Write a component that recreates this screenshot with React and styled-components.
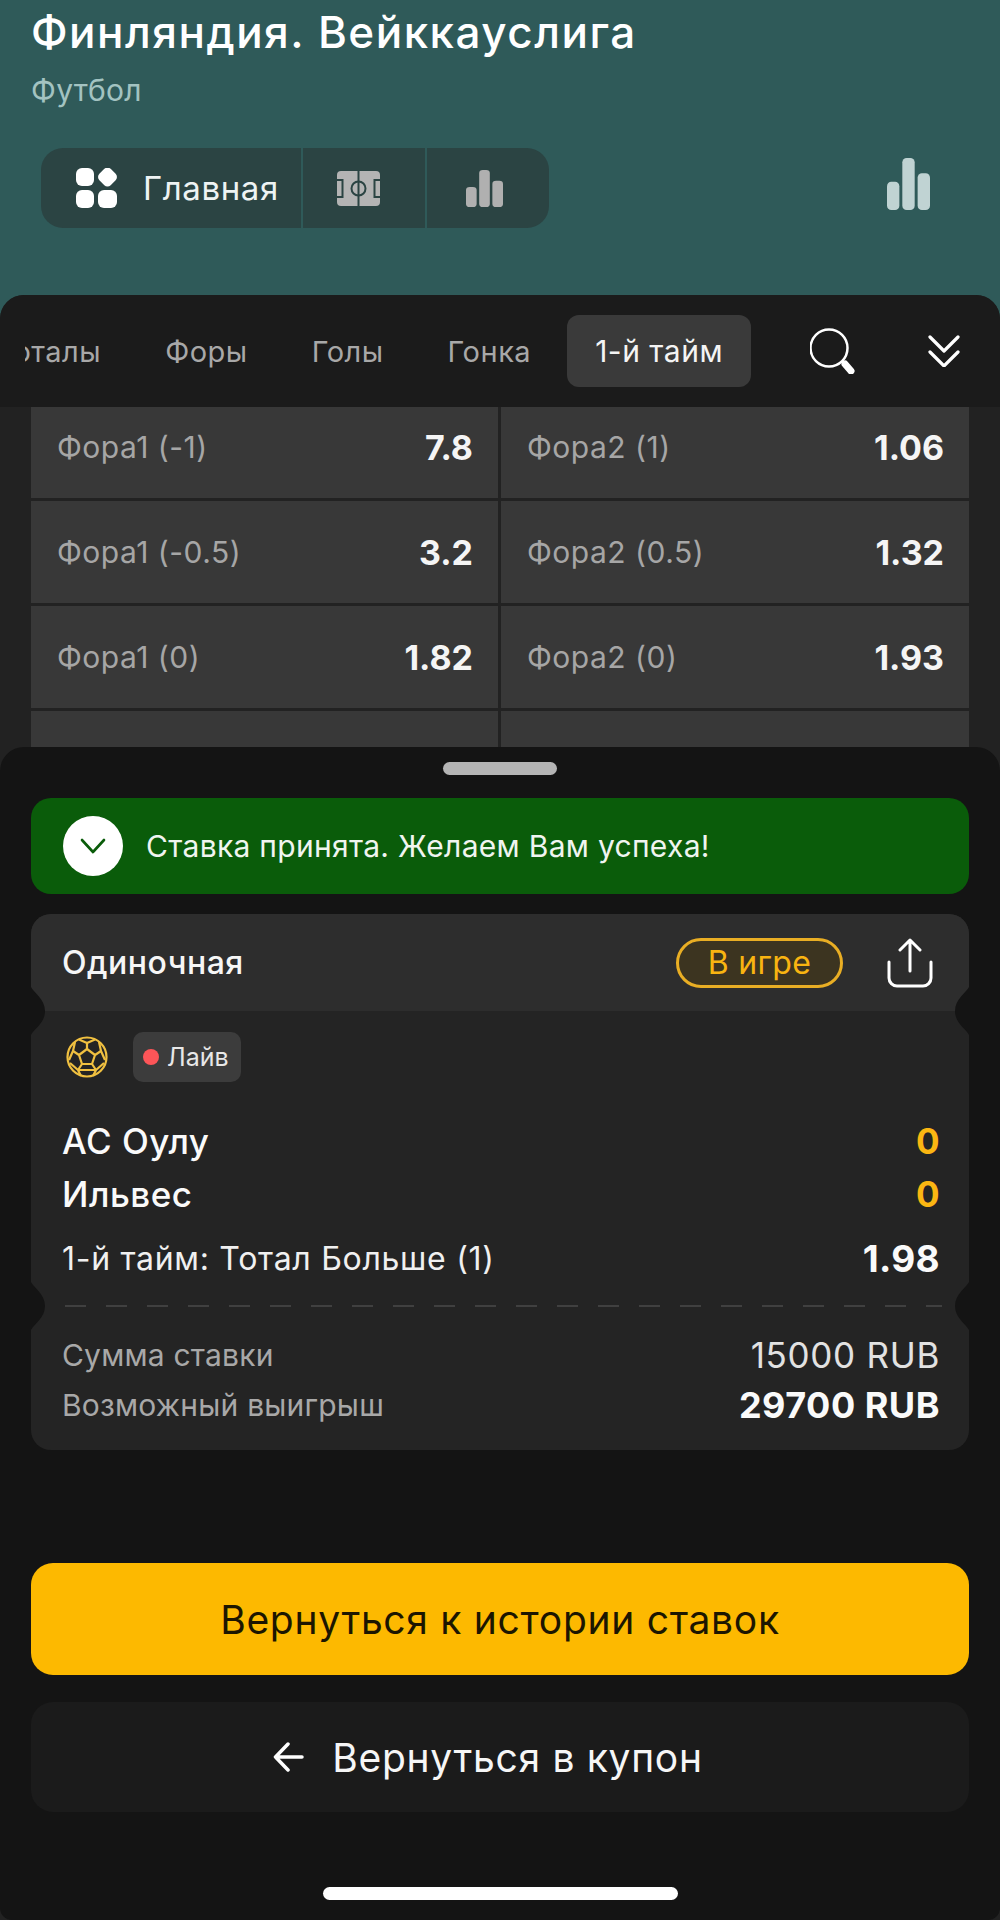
import React from 'react';
import styled, { createGlobalStyle } from 'styled-components';

const GlobalStyle = createGlobalStyle`
  html, body {
    margin: 0;
    padding: 0;
    background: #2f5a59;
  }
  * {
    box-sizing: border-box;
  }
`;

const Page = styled.div`
  position: relative;
  width: 1000px;
  height: 1920px;
  overflow: hidden;
  display: flex;
  flex-direction: column;
  background: #2f5a59;
  font-family: Inter, "Noto Sans", sans-serif;
`;

const Header = styled.header`
  height: 295px;
  flex-shrink: 0;
  padding: 7px 31px 0;
`;

const Title = styled.h1`
  margin: 0;
  font-size: 44px;
  line-height: 50px;
  font-weight: 500;
  letter-spacing: 1.5px;
  color: #fff;
`;

const Subtitle = styled.div`
  margin-top: 15px;
  font-size: 30px;
  line-height: 36px;
  letter-spacing: 0.3px;
  color: #a3c3c1;
`;

const HeaderRow = styled.div`
  margin-top: 40px;
  padding: 0 39px 0 10px;
  display: flex;
  align-items: flex-start;
  justify-content: space-between;
`;

const Segments = styled.div`
  display: flex;
  height: 80px;
  gap: 2px;
`;

const Segment = styled.div`
  display: flex;
  align-items: center;
  justify-content: ${p => (p.$start ? 'flex-start' : 'center')};
  padding: ${p => (p.$start ? '0 0 0 35px' : `0 ${p.$inset}px 0 0`)};
  gap: 26px;
  width: ${p => p.$width}px;
  background: #2b4443;
  border-radius: ${p => p.$radius};
  font-size: 33px;
  letter-spacing: 0.6px;
  color: #eef3f3;
`;

const StatsButton = styled.div`
  margin-top: 10px;
  display: flex;
`;

const Markets = styled.section`
  flex: 1;
  display: flex;
  flex-direction: column;
  background: #222;
  border-radius: 24px 24px 0 0;
  overflow: hidden;
`;

const TabBar = styled.nav`
  position: relative;
  z-index: 1;
  height: 112px;
  flex-shrink: 0;
  display: flex;
  align-items: center;
  padding: 8px 0 8px 25px;
  background: #1b1b1b;
`;

const TabScroll = styled.div`
  width: 726px;
  overflow: hidden;
  display: flex;
  justify-content: flex-end;
  gap: 8px;
  flex-shrink: 0;
`;

const Tab = styled.div`
  flex-shrink: 0;
  height: 72px;
  padding: 0 28px;
  display: flex;
  align-items: center;
  border-radius: 12px;
  font-size: ${p => (p.$active ? 30 : 29)}px;
  letter-spacing: 0.5px;
  background: ${p => (p.$active ? '#3a3a3a' : 'transparent')};
  color: ${p => (p.$active ? '#f4f4f4' : '#a8a8a8')};
`;

const TabIcons = styled.div`
  display: flex;
  align-items: center;
  margin-left: 59px;
  gap: 72px;
`;

const OddsGrid = styled.div`
  margin: -11px 31px 0;
  display: grid;
  grid-template-columns: 467px 468px;
  grid-auto-rows: 102px;
  gap: 3px;
  justify-content: space-between;
`;

const OddsCell = styled.div`
  padding: 0 25px 0 26px;
  display: flex;
  align-items: center;
  justify-content: space-between;
  background: #383838;
`;

const OddsLabel = styled.span`
  font-size: 30px;
  letter-spacing: 0.5px;
  color: #a6a6a6;
`;

const OddsValue = styled.span`
  font-size: 34px;
  font-weight: 700;
  color: #f5f5f5;
`;

const Sheet = styled.section`
  position: absolute;
  left: 0;
  right: 0;
  top: 747px;
  bottom: 0;
  padding: 15px 31px 0;
  background: #141414;
  border-radius: 24px 24px 12px 12px;
  display: flex;
  flex-direction: column;
`;

const Handle = styled.div`
  align-self: center;
  width: 114px;
  height: 13px;
  border-radius: 7px;
  background: #b5b5b5;
`;

const Banner = styled.div`
  margin-top: 23px;
  height: 96px;
  padding: 0 32px;
  display: flex;
  align-items: center;
  gap: 23px;
  background: #0a5c0a;
  border-radius: 20px;
  font-size: 30px;
  letter-spacing: 0.3px;
  color: #f0f5f0;
`;

const BannerCheck = styled.div`
  width: 60px;
  height: 60px;
  flex-shrink: 0;
  border-radius: 50%;
  background: #fff;
  display: flex;
  align-items: center;
  justify-content: center;
`;

const Card = styled.article`
  position: relative;
  margin-top: 20px;
  background: #242424;
  border-radius: 20px;
`;

const NotchShape = styled.svg`
  position: absolute;
  top: ${p => p.$top - 24}px;
  ${p => p.$side}: 0;
  transform: ${p => (p.$side === 'right' ? 'scaleX(-1)' : 'none')};
`;

const CardHeader = styled.div`
  height: 97px;
  padding: 0 36px 0 31px;
  display: flex;
  align-items: center;
  background: #2d2d2d;
  border-radius: 20px 20px 0 0;
`;

const CardTitle = styled.div`
  flex: 1;
  font-size: 32px;
  font-weight: 500;
  letter-spacing: 0.5px;
  color: #f6f6f6;
`;

const StatusBadge = styled.div`
  width: 167px;
  height: 50px;
  margin-right: 44px;
  display: flex;
  align-items: center;
  justify-content: center;
  border: 3px solid #e9ae24;
  border-radius: 25px;
  background: #3c3420;
  font-size: 32px;
  letter-spacing: 0.3px;
  color: #f9b411;
`;

const CardBody = styled.div`
  padding: 21px 29px 25px 31px;
`;

const MetaRow = styled.div`
  display: flex;
  align-items: center;
  height: 50px;
  margin-bottom: 32px;
  padding-left: 4px;
  gap: 25px;
`;

const LiveChip = styled.div`
  width: 108px;
  height: 50px;
  padding-left: 10px;
  display: flex;
  align-items: center;
  gap: 8px;
  background: #3c3c3c;
  border-radius: 10px;
  font-size: 25px;
  color: #e8e8e8;
`;

const LiveDot = styled.span`
  width: 16px;
  height: 16px;
  border-radius: 50%;
  background: #fd5558;
`;

const TeamRow = styled.div`
  height: 53px;
  display: flex;
  align-items: center;
  justify-content: space-between;
  font-size: 35px;
  font-weight: 500;
  letter-spacing: 0.5px;
  color: #fafafa;
`;

const Score = styled.span`
  font-weight: 700;
  color: #fbb612;
`;

const BetRow = styled.div`
  margin-top: 16px;
  height: 44px;
  display: flex;
  align-items: center;
  justify-content: space-between;
  font-size: 32px;
  letter-spacing: 0.7px;
  color: #f0f0f0;
`;

const BetOdds = styled.span`
  font-size: 37px;
  font-weight: 700;
  letter-spacing: 0.3px;
  color: #fafafa;
`;

const CardFooter = styled.div`
  padding: 0 29px 20px 31px;
`;

const DashLine = styled.div`
  height: 2px;
  margin: 0 -2px 23px 3px;
  background: repeating-linear-gradient(90deg, #404040 0 21px, transparent 21px 41px);
`;

const SumRow = styled.div`
  height: 50px;
  display: flex;
  align-items: center;
  justify-content: space-between;
  font-size: 30px;
  letter-spacing: 0.2px;
  color: #a8a8a8;
`;

const SumValue = styled.span`
  font-size: ${p => (p.$bold ? 36 : 35)}px;
  font-weight: ${p => (p.$bold ? 700 : 400)};
  letter-spacing: ${p => (p.$bold ? 0.5 : 0.7)}px;
  color: ${p => (p.$bold ? '#fafafa' : '#e2e2e2')};
`;

const ActionButton = styled.button`
  width: 100%;
  height: ${p => (p.$primary ? 112 : 110)}px;
  margin-top: ${p => (p.$primary ? 113 : 27)}px;
  padding: 0 ${p => (p.$primary ? 0 : 24)}px 0 0;
  border: none;
  border-radius: 22px;
  display: flex;
  align-items: center;
  justify-content: center;
  gap: 28px;
  font-family: inherit;
  font-size: 39px;
  letter-spacing: 0.7px;
  background: ${p => (p.$primary ? '#fdb900' : '#1b1b1b')};
  color: ${p => (p.$primary ? '#1c1600' : '#f6f6f6')};
`;

const HomeIndicator = styled.div`
  align-self: center;
  width: 355px;
  height: 13px;
  margin-top: 75px;
  border-radius: 7px;
  background: #fff;
`;

const GridIcon = () => (
  <svg width="41" height="40" viewBox="0 0 41 40" fill="#fff">
    <rect x="0" y="0" width="18" height="18" rx="6" />
    <rect x="23.500" y="1" width="16" height="16" rx="4.500" transform="rotate(45 31.500 9)" />
    <rect x="0" y="22" width="18" height="18" rx="6" />
    <rect x="22" y="22" width="19" height="18" rx="6" />
  </svg>
);

const FieldIcon = () => (
  <svg width="43" height="35" viewBox="0 0 43 35">
    <rect width="43" height="35" rx="4" fill="#b4b4b4" />
    <g fill="none" stroke="#2b4443" strokeWidth="2">
      <path d="M21.500 0v35" />
      <circle cx="21.500" cy="17.500" r="7" />
      <path d="M0 9h5.500v17H0M43 9h-5.500v17H43" />
    </g>
  </svg>
);

const BarsIcon = ({ width, height, color }) => (
  <svg width={width} height={height} viewBox="0 0 40 48" preserveAspectRatio="none" fill={color}>
    <rect x="0" y="22" width="11.500" height="26" rx="4" />
    <rect x="14.250" y="0" width="11.500" height="48" rx="4" />
    <rect x="28.500" y="14" width="11.500" height="34" rx="4" />
  </svg>
);

const SearchIcon = () => (
  <svg width="46" height="46" viewBox="0 0 46 46" fill="none" stroke="#fff">
    <circle cx="19" cy="20" r="18.500" strokeWidth="2.500" />
    <path d="M35 36l6 7" strokeWidth="7" strokeLinecap="round" />
  </svg>
);

const DoubleChevron = () => (
  <svg width="32" height="32" viewBox="0 0 32 32" fill="none" stroke="#fff" strokeWidth="3.200" strokeLinecap="round" strokeLinejoin="round">
    <path d="M2 2l14 14L30 2" />
    <path d="M2 17l14 14 14-14" />
  </svg>
);

const CheckIcon = () => (
  <svg width="26" height="16" viewBox="0 0 26 16" fill="none" stroke="#0a5c0a" strokeWidth="2.600" strokeLinecap="round" strokeLinejoin="round">
    <path d="M2 2l11 12L24 2" />
  </svg>
);

const ShareIcon = () => (
  <svg width="46" height="50" viewBox="0 0 46 50" fill="none" stroke="#fff" strokeWidth="3" strokeLinecap="round" strokeLinejoin="round">
    <path d="M23 33V2M13 12L23 2l10 10" />
    <path d="M2 24v16a8 8 0 0 0 8 8h26a8 8 0 0 0 8-8V24" />
  </svg>
);

const BallIcon = () => (
  <svg width="42" height="42" viewBox="0 0 42 42" fill="none" stroke="#f0c040" strokeWidth="2.200" strokeLinejoin="round">
    <circle cx="21" cy="21" r="19.500" />
    <path d="M21 13l8 6-3 9H16l-3-9z" />
    <path d="M21 13V7M29 19l6-4M26 28l4 6M16 28l-4 6M13 19l-6-4" />
    <path d="M13 3.500L21 7l8-3.500M33 6l2 9 4 9M30 34l8-7M30 34H12l-8-7M30 34l-3 6M12 34l3 6M9 6L7 15l-4 9" />
  </svg>
);

const BackArrow = () => (
  <svg width="31" height="30" viewBox="0 0 31 30" fill="none" stroke="#fff" strokeWidth="3.500" strokeLinecap="round" strokeLinejoin="round">
    <path d="M29 15H2.500M15 2L2.500 15 15 28" />
  </svg>
);

const Notch = ({ side, top }) => (
  <NotchShape $side={side} $top={top} width="14" height="48" viewBox="0 0 14 48" fill="#141414">
    <path d="M0 0C3 6 14 12 14 24C14 36 3 42 0 48Z" />
  </NotchShape>
);

const odds = [
  ['Фора1 (-1)', '7.8', 'Фора2 (1)', '1.06'],
  ['Фора1 (-0.5)', '3.2', 'Фора2 (0.5)', '1.32'],
  ['Фора1 (0)', '1.82', 'Фора2 (0)', '1.93'],
];

const App = () => (
  <Page>
    <GlobalStyle />
    <Header>
      <Title>Финляндия. Вейккауслига</Title>
      <Subtitle>Футбол</Subtitle>
      <HeaderRow>
        <Segments>
          <Segment $start $width={260} $radius="22px 0 0 22px">
            <GridIcon />
            Главная
          </Segment>
          <Segment $width={122} $inset={12} $radius="0">
            <FieldIcon />
          </Segment>
          <Segment $width={122} $inset={8} $radius="0 22px 22px 0">
            <BarsIcon width={37} height={37} color="#b0b0b0" />
          </Segment>
        </Segments>
        <StatsButton>
          <BarsIcon width={43} height={52} color="#c0d3d3" />
        </StatsButton>
      </HeaderRow>
    </Header>

    <Markets>
      <TabBar>
        <TabScroll>
          <Tab>Тоталы</Tab>
          <Tab>Форы</Tab>
          <Tab>Голы</Tab>
          <Tab>Гонка</Tab>
          <Tab $active>1-й тайм</Tab>
        </TabScroll>
        <TabIcons>
          <SearchIcon />
          <DoubleChevron />
        </TabIcons>
      </TabBar>
      <OddsGrid>
        {odds.map(row => (
          <React.Fragment key={row[0]}>
            <OddsCell>
              <OddsLabel>{row[0]}</OddsLabel>
              <OddsValue>{row[1]}</OddsValue>
            </OddsCell>
            <OddsCell>
              <OddsLabel>{row[2]}</OddsLabel>
              <OddsValue>{row[3]}</OddsValue>
            </OddsCell>
          </React.Fragment>
        ))}
        <OddsCell />
        <OddsCell />
      </OddsGrid>
    </Markets>

    <Sheet>
      <Handle />
      <Banner>
        <BannerCheck>
          <CheckIcon />
        </BannerCheck>
        Ставка принята. Желаем Вам успеха!
      </Banner>

      <Card>
        <CardHeader>
          <CardTitle>Одиночная</CardTitle>
          <StatusBadge>В игре</StatusBadge>
          <ShareIcon />
        </CardHeader>
        <CardBody>
          <MetaRow>
            <BallIcon />
            <LiveChip>
              <LiveDot />
              Лайв
            </LiveChip>
          </MetaRow>
          <TeamRow>
            АС Оулу
            <Score>0</Score>
          </TeamRow>
          <TeamRow>
            Ильвес
            <Score>0</Score>
          </TeamRow>
          <BetRow>
            1-й тайм: Тотал Больше (1)
            <BetOdds>1.98</BetOdds>
          </BetRow>
        </CardBody>
        <CardFooter>
          <DashLine />
          <SumRow>
            Сумма ставки
            <SumValue>15000 RUB</SumValue>
          </SumRow>
          <SumRow>
            Возможный выигрыш
            <SumValue $bold>29700 RUB</SumValue>
          </SumRow>
        </CardFooter>
        <Notch side="left" top={97} />
        <Notch side="right" top={97} />
        <Notch side="left" top={392} />
        <Notch side="right" top={392} />
      </Card>

      <ActionButton $primary>Вернуться к истории ставок</ActionButton>
      <ActionButton>
        <BackArrow />
        Вернуться в купон
      </ActionButton>
      <HomeIndicator />
    </Sheet>
  </Page>
);

export default App;
